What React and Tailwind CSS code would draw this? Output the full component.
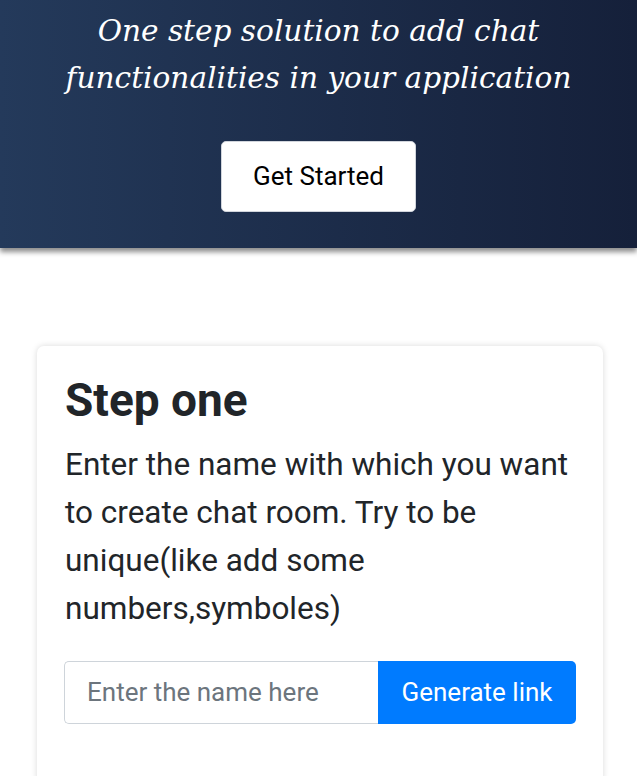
import React, { useState } from 'react';

export default function App() {
  const [name, setName] = useState('');

  return (
    <div className="min-h-screen bg-white" style={{ fontFamily: 'Roboto, "Liberation Sans", sans-serif' }}>
      {/* Hero */}
      <header className="h-[248px] bg-gradient-to-r from-[#243a5b] to-[#15203a] shadow-[0_4px_5px_rgba(0,0,0,0.45)] flex flex-col items-center pt-[8px]">
        <h1
          className="text-white italic text-[29.6px] leading-[47px] text-center font-normal"
          style={{ fontFamily: '"DejaVu Serif", "Liberation Serif", serif' }}
        >
          One step solution to add chat
          <br />
          functionalities in your application
        </h1>
        <button className="mt-[39px] w-[195px] h-[71px] bg-white rounded-[5px] border border-gray-300 text-black text-[26px]">
          Get Started
        </button>
      </header>

      {/* Step card */}
      <section className="pl-[37px] pt-[98px]">
        <div className="w-[566px] bg-white rounded-[7px] shadow-[0_0_6px_rgba(0,0,0,0.15)] px-[28px] pt-[26px] pb-[60px]">
          <h2 className="text-[46px] leading-[56px] font-bold text-[#212529]">Step one</h2>
          <p className="mt-[13px] text-[31.5px] leading-[48px] text-[#212529]">
            Enter the name with which you want to create chat room. Try to be unique(like add some numbers,symboles)
          </p>
          <div className="mt-[28px] flex h-[63px] -ml-[1px] mr-[-1px]">
            <input
              value={name}
              onChange={(e) => setName(e.target.value)}
              placeholder="Enter the name here"
              className="flex-1 min-w-0 border border-[#ced4da] border-r-0 rounded-l-[5px] px-[22px] text-[26px] text-[#495057] placeholder:text-[#6c757d] outline-none"
            />
            <button className="w-[198px] bg-[#007bff] text-white text-[26px] rounded-r-[5px]">
              Generate link
            </button>
          </div>
        </div>
      </section>
    </div>
  );
}
